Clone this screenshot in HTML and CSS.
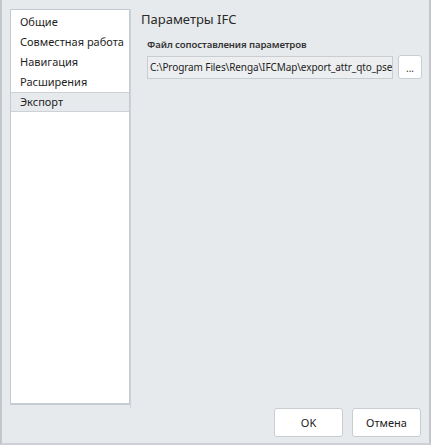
FILE: index.html
```html
<!DOCTYPE html>
<html lang="ru">
<head>
  <meta charset="UTF-8" />
  <title>Настройки</title>
  <link rel="stylesheet" href="styles.css">
</head>
<body>
  <div class="dialog">
    <div class="main">
      <ul class="nav">
        <li>Общие</li>
        <li>Совместная работа</li>
        <li>Навигация</li>
        <li>Расширения</li>
        <li class="active">Экспорт</li>
      </ul>

      <div class="content">
        <h2>Параметры IFC</h2>
        <div class="field">
          <label>Файл сопоставления параметров</label>
          <div class="path-row">
            <div class="path">C:\Program Files\Renga\IFCMap\export_attr_qto_pse</div>
            <button class="browse">...</button>
          </div>
        </div>
      </div>
    </div>

    <div class="footer">
      <button class="btn">OK</button>
      <button class="btn">Отмена</button>
    </div>
  </div>
</body>
</html>
```

FILE: styles.css
```css
html, body {
  margin: 0;
  height: 100%;
}

body {
  font-family: "Noto Sans", "Open Sans", sans-serif;
  font-size: 11px;
  color: #1e1e1e;
  background: #fff;
}

.dialog {
  box-sizing: border-box;
  width: 431px;
  height: 445px;
  background: #e7eaed;
  border-left: 2px solid #c3c7cc;
  border-right: 2px solid #c3c7cc;
  border-bottom: 2px solid #cdd1d5;
  display: flex;
  flex-direction: column;
}

.main {
  flex: 1;
  display: flex;
  padding: 9px 0 0 8px;
}

.nav {
  list-style: none;
  margin: 0;
  padding: 2px 0 0;
  width: 118px;
  height: 391px;
  background: #fff;
  border: 1px solid #c5cbd2;
  border-bottom-width: 2px;
}

.nav li {
  height: 20px;
  line-height: 19px;
  padding-left: 9px;
  white-space: nowrap;
}

.nav li.active {
  background: #e7eaed;
  border-top: 1px solid #cdd2d8;
  border-bottom: 1px solid #cdd2d8;
  height: 18px;
  line-height: 18px;
}

.content {
  flex: 1;
  padding: 0 0 0 10px;
  border-left: 1px solid #cdd2d8;
}

.content h2 {
  margin: 0;
  padding: 1px 0 0;
  font-weight: normal;
  font-size: 13px;
  line-height: 18px;
  color: #2a2a2a;
}

.field {
  padding: 10px 0 0 6px;
}

.field label {
  display: block;
  font-size: 9.6px;
  font-weight: 600;
  letter-spacing: -0.1px;
  line-height: 14px;
  color: #333;
}

.path-row {
  display: flex;
  align-items: center;
  gap: 5px;
  margin-top: 3px;
}

.path {
  box-sizing: border-box;
  width: 246px;
  height: 23px;
  line-height: 21px;
  padding: 0 2px;
  font-size: 10px;
  letter-spacing: -0.1px;
  background: #eceef0;
  border: 1px solid #c8cdd2;
  white-space: nowrap;
  overflow: hidden;
}

.browse {
  box-sizing: border-box;
  width: 24px;
  height: 24px;
  padding: 2px 0 0;
  font-family: inherit;
  font-size: 10px;
  color: #333;
  background: #fff;
  border: 1px solid #c8cdd2;
  border-radius: 3px;
}

.footer {
  display: flex;
  justify-content: flex-end;
  gap: 9px;
  padding: 0 8px 6px 0;
}

.btn {
  box-sizing: border-box;
  width: 69px;
  height: 29px;
  font-family: inherit;
  font-size: 11px;
  color: #222;
  background: #fff;
  border: 1px solid #c8cdd2;
  border-radius: 3px;
}
```
